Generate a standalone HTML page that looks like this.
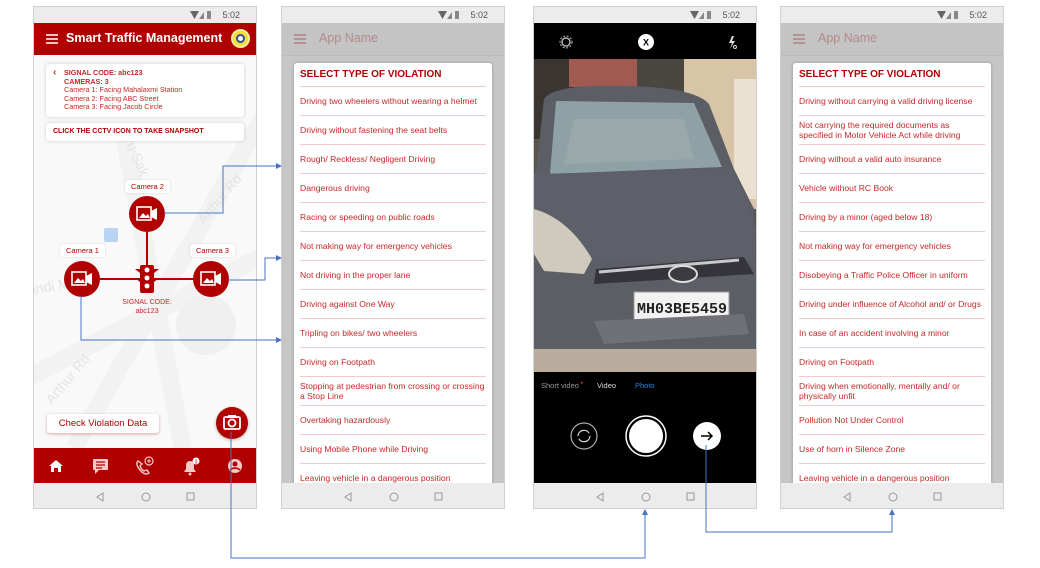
<!DOCTYPE html>
<html><head><meta charset="utf-8"><style>
*{margin:0;padding:0;box-sizing:border-box}
body{width:1040px;height:568px;background:#fff;position:relative;overflow:hidden;font-family:"Liberation Sans",Arial,sans-serif}
.a{position:absolute}
.scr{position:absolute;top:6px;width:224px;height:503px;border:1px solid #d0d0d0;overflow:hidden;background:#fff}
.sb{position:absolute;left:0;top:0;width:100%;height:16px;background:#ececec;font-size:9px;color:#555}
.sb span{position:absolute;right:16px;top:3px}
.sbi{position:absolute;right:44px;top:3px;width:22px;height:10px}
.nav{position:absolute;left:0;top:476px;width:100%;height:27px;background:#ececec}
.card{position:absolute;left:12px;top:56px;width:198px;height:430px;background:#fff;border-radius:3px;box-shadow:0 0 3px rgba(0,0,0,.25);padding:0 6px}
.card h3{font-size:10px;color:#b00000;height:24px;line-height:24px;border-bottom:1px solid #f2caca;font-weight:bold}
.card div{height:29px;border-bottom:1px solid #f2caca;font-size:8.6px;color:#c62828;display:flex;align-items:center;line-height:10px}
.lbl{position:absolute;background:#fff;border-radius:3px;font-size:7.5px;color:#b00000;padding:2px 6px;box-shadow:0 0 2px rgba(0,0,0,.15)}
</style></head><body>

<!-- SCREEN 1 -->
<div class="scr" style="left:33px">
 <div class="a" style="left:0;top:48px;width:224px;height:393px;background:#f9f9f9"></div>
 <svg class="a" style="left:0;top:48px" width="224" height="393"><g fill="none" stroke="#f2f2f2" stroke-width="18"><path d="M-20 330 L230 200"/><path d="M90 80 L150 400"/><path d="M230 60 L40 393"/></g><circle cx="172" cy="270" r="30" fill="#f0f0f0"/>
 <g fill="#e4e4e4" font-size="14" font-family="Liberation Sans"><text transform="translate(18 350) rotate(-50)">Arthur Rd</text><text transform="translate(170 170) rotate(-50)">Arthur Rd</text><text transform="translate(-5 240) rotate(-10)">andi Marg</text><text transform="translate(92 90) rotate(65)">u Sak</text></g>
 <rect x="70" y="173" width="14" height="14" rx="2" fill="#b9d3f2"/></svg>
 <div class="sb"><svg class="sbi" viewBox="0 0 22 10"><path d="M0 1 L9 1 L4.5 9Z" fill="#666"/><path d="M9 9 L14 2 L14 9Z" fill="#888"/><rect x="17" y="1" width="4" height="8" fill="#888"/></svg><span>5:02</span></div>
 <div class="a" style="left:0;top:16px;width:224px;height:32px;background:#b00000"></div>
 <svg class="a" style="left:12px;top:27px" width="12" height="10"><path d="M0 1H12M0 5H12M0 9H12" stroke="#fff" stroke-width="1.6"/></svg>
 <div class="a" style="left:32px;top:24px;color:#fff;font-size:12.5px;font-weight:bold">Smart Traffic Management</div>
 <div class="a" style="left:197px;top:22px;width:19px;height:19px;border-radius:50%;background:#f2dd3a;border:2px solid #f7ec9a"><div style="margin:3px;width:9px;height:9px;border-radius:50%;background:#fff;border:2px solid #3b4c96"></div></div>
 <div class="a" style="left:12px;top:57px;width:198px;height:53px;background:#fff;border-radius:3px;box-shadow:0 0 3px rgba(0,0,0,.2);font-size:7.2px;color:#c62828;line-height:8.5px;padding:5px 0 0 18px">
  <div class="a" style="left:7px;top:5px;font-size:10px;font-weight:bold">‹</div>
  <b>SIGNAL CODE: abc123<br>CAMERAS: 3</b><br>Camera 1: Facing Mahalaxmi Station<br>Camera 2: Facing ABC Street<br>Camera 3: Facing Jacob Circle</div>
 <div class="a" style="left:12px;top:116px;width:198px;height:18px;background:#fff;border-radius:3px;box-shadow:0 0 3px rgba(0,0,0,.2);font-size:7px;font-weight:bold;color:#b00000;line-height:18px;padding-left:7px">CLICK THE CCTV ICON TO TAKE SNAPSHOT</div>
 <svg class="a" style="left:0;top:150px" width="224" height="170">
  <g stroke="#b00000" stroke-width="2"><path d="M113 57V122M48 122H177"/></g>
  <g fill="#b00000"><circle cx="113" cy="57" r="18"/><circle cx="48" cy="122" r="18"/><circle cx="177" cy="122" r="18"/>
  <rect x="106" y="108" width="14" height="28" rx="2"/><path d="M101 112h5v4zM125 112h-5v4zM101 121h5v4zM125 121h-5v4z"/></g>
  <g fill="#fff"><circle cx="113" cy="113" r="2.5"/><circle cx="113" cy="121" r="2.5"/><circle cx="113" cy="129" r="2.5"/></g>
  <g fill="none" stroke="#fff" stroke-width="1.6"><rect x="103" y="50" width="14" height="13"/><rect x="38" y="115" width="14" height="13"/><rect x="167" y="115" width="14" height="13"/></g>
  <g fill="#fff"><path d="M117 54l6-3v12l-6-3zM52 119l6-3v12l-6-3zM181 119l6-3v12l-6-3zM105 61l4-5 3 3 2-2 2 4zM40 126l4-5 3 3 2-2 2 4zM169 126l4-5 3 3 2-2 2 4z"/></g>
  <text x="113" y="147" fill="#c62828" font-size="7" text-anchor="middle" font-family="Liberation Sans">SIGNAL CODE:</text>
  <text x="113" y="156" fill="#c62828" font-size="7" text-anchor="middle" font-family="Liberation Sans">abc123</text>
 </svg>
 <div class="lbl" style="left:91px;top:173px">Camera 2</div>
 <div class="lbl" style="left:26px;top:237px">Camera 1</div>
 <div class="lbl" style="left:156px;top:237px">Camera 3</div>
 <div class="a" style="left:13px;top:407px;width:112px;height:19px;background:#fff;border-radius:3px;box-shadow:0 1px 3px rgba(176,0,0,.35);font-size:9.5px;color:#b00000;text-align:center;line-height:19px">Check Violation Data</div>
 <div class="a" style="left:182px;top:400px;width:32px;height:32px;border-radius:50%;background:#b00000;box-shadow:0 1px 3px rgba(0,0,0,.3)"><svg width="32" height="32"><rect x="8" y="10" width="16" height="12" rx="1.5" fill="none" stroke="#fff" stroke-width="1.8"/><rect x="12" y="8" width="8" height="3" fill="#fff"/><circle cx="16" cy="16" r="3.5" fill="none" stroke="#fff" stroke-width="1.8"/></svg></div>
 <div class="a" style="left:0;top:441px;width:224px;height:35px;background:#b00000"></div>
 <svg class="a" style="left:0;top:441px" width="224" height="35">
  <path d="M15 18l7-6 7 6h-2v6h-3v-4h-4v4h-3v-6z" fill="#fff"/>
  <rect x="59" y="11" width="15" height="11" rx="1" fill="#f7caca"/><path d="M61 22v4l4-4z" fill="#f7caca"/><path d="M62 14h9M62 17h9M62 20h6" stroke="#b00000" stroke-width="1.2"/>
  <path d="M104 13q-3 3 2 9t9 3l-2-3-3 1q-3-2-4-5l2-2z" fill="none" stroke="#f7caca" stroke-width="1.4"/><circle cx="115" cy="13" r="4" fill="none" stroke="#f7caca" stroke-width="1.2"/><path d="M115 11v4M113 13h4" stroke="#f7caca"/>
  <path d="M150 24h12l-2-3v-4a4 4 0 0 0-8 0v4z" fill="#f7caca"/><circle cx="156" cy="26" r="1.5" fill="#f7caca"/><circle cx="162" cy="13" r="3.5" fill="#fff"/><text x="162" y="15.5" font-size="5" fill="#b00000" text-anchor="middle" font-family="Liberation Sans">3</text>
  <circle cx="201" cy="18" r="7" fill="#f7caca"/><circle cx="201" cy="16" r="2.5" fill="#b00000"/><path d="M196 22q5-4 10 0" stroke="#b00000" stroke-width="1.5" fill="none"/>
 </svg>
 <div class="nav"><svg width="224" height="27"><path d="M69 10l-6 4 6 4z" fill="none" stroke="#999"/><circle cx="112" cy="14" r="4" fill="none" stroke="#999"/><rect x="153" y="10" width="7" height="7" fill="none" stroke="#999"/></svg></div>
</div>

<!-- SCREEN 2 -->
<div class="scr" style="left:281px;background:#c6c6c6">
 <div class="sb"><svg class="sbi" viewBox="0 0 22 10"><path d="M0 1 L9 1 L4.5 9Z" fill="#666"/><path d="M9 9 L14 2 L14 9Z" fill="#888"/><rect x="17" y="1" width="4" height="8" fill="#888"/></svg><span>5:02</span></div>
 <div class="a" style="left:0;top:16px;width:224px;height:33px;background:#c4c4c4;border-bottom:1px solid #bbb"></div>
 <svg class="a" style="left:12px;top:27px" width="12" height="10"><path d="M0 1H12M0 5H12M0 9H12" stroke="#b48080" stroke-width="1.4"/></svg>
 <div class="a" style="left:37px;top:24px;color:#b48a8a;font-size:12.5px">App Name</div>
 <div class="card"><h3>SELECT TYPE OF VIOLATION</h3>
  <div>Driving two wheelers without wearing a helmet</div><div>Driving without fastening the seat belts</div><div>Rough/ Reckless/ Negligent Driving</div><div>Dangerous driving</div><div>Racing or speeding on public roads</div><div>Not making way for emergency vehicles</div><div>Not driving in the proper lane</div><div>Driving against One Way</div><div>Tripling on bikes/ two wheelers</div><div>Driving on Footpath</div><div>Stopping at pedestrian from crossing or crossing a Stop Line</div><div>Overtaking hazardously</div><div>Using Mobile Phone while Driving</div><div>Leaving vehicle in a dangerous position</div></div>
 <div class="nav"><svg width="224" height="27"><path d="M69 10l-6 4 6 4z" fill="none" stroke="#999"/><circle cx="112" cy="14" r="4" fill="none" stroke="#999"/><rect x="153" y="10" width="7" height="7" fill="none" stroke="#999"/></svg></div>
</div>

<!-- SCREEN 3 -->
<div class="scr" style="left:533px;background:#000">
 <div class="sb"><svg class="sbi" viewBox="0 0 22 10"><path d="M0 1 L9 1 L4.5 9Z" fill="#666"/><path d="M9 9 L14 2 L14 9Z" fill="#888"/><rect x="17" y="1" width="4" height="8" fill="#888"/></svg><span>5:02</span></div>
 <svg class="a" style="left:0;top:16px" width="224" height="36"><circle cx="32" cy="19" r="4" fill="none" stroke="#bbb" stroke-width="1.4"/><circle cx="32" cy="19" r="6" fill="none" stroke="#bbb" stroke-dasharray="2 1.6"/><circle cx="112" cy="19" r="8" fill="#fff"/><text x="112" y="22.5" font-size="9" font-weight="bold" text-anchor="middle" font-family="Liberation Sans">X</text><path d="M198 13l-3 7h3l-2 6 5-8h-3l2-5z" fill="#ddd"/><circle cx="201" cy="24" r="1.5" fill="none" stroke="#ddd"/></svg>
 <svg class="a" style="left:0;top:52px" width="224" height="313">
  <rect width="224" height="313" fill="#5a554e"/>
  <rect x="0" y="0" width="40" height="80" fill="#3a3530"/>
  <rect x="35" y="0" width="68" height="28" fill="#a05a52"/>
  <rect x="103" y="0" width="50" height="40" fill="#4a4640"/>
  <rect x="150" y="0" width="74" height="150" fill="#d8c4a6"/><rect x="200" y="20" width="24" height="120" fill="#ebe1d2"/>
  <rect x="0" y="280" width="224" height="33" fill="#b8ad9c"/>
  <path d="M10 40 Q20 25 90 27 Q160 28 175 45 L200 110 L220 150 L224 290 L0 290 L0 130 Z" fill="#5c5e66"/>
  <path d="M22 42 L160 44 L188 108 L16 115 Z" fill="#8ea2a6"/>
  <path d="M40 60 L150 60 L160 100 L30 105 Z" fill="#a4b0ae" opacity=".5"/>
  <path d="M0 115 L200 110 L222 170 L220 200 L0 205 Z" fill="#5e6069"/>
  <path d="M0 150 Q35 160 58 200 L50 215 L10 212 L0 195 Z" fill="#cfcabd"/>
  <path d="M62 210 L210 198 L220 215 L60 225 Z" fill="#34343a"/>
  <path d="M65 213 L205 201" stroke="#c8c8cc" stroke-width="3"/>
  <ellipse cx="149" cy="215" rx="14" ry="8" fill="#3a3a40" stroke="#ddd" stroke-width="2"/>
  <rect x="100" y="233" width="95" height="29" fill="#f2f2f2" stroke="#999"/>
  <text x="148" y="254" font-size="15" font-weight="bold" text-anchor="middle" fill="#222" font-family="Liberation Mono">MH03BE5459</text>
  <path d="M60 262 L210 255 L215 275 L70 285 Z" fill="#707078"/>
 </svg>
 <div class="a" style="left:7px;top:374px;font-size:7.5px;color:#999">Short video<span style="color:#f44;font-size:6px;vertical-align:top"> •</span></div>
 <div class="a" style="left:63px;top:374px;font-size:7.5px;color:#ddd">Video</div>
 <div class="a" style="left:101px;top:374px;font-size:7.5px;color:#1e88e5">Photo</div>
 <svg class="a" style="left:0;top:400px" width="224" height="60">
  <circle cx="50" cy="29" r="13" fill="none" stroke="#aaa" stroke-width="1.2"/><path d="M44 29a6 6 0 0 1 11-3M56 29a6 6 0 0 1-11 3" fill="none" stroke="#ddd" stroke-width="1.2"/>
  <circle cx="112" cy="29" r="20" fill="none" stroke="#fff" stroke-width="1.5"/><circle cx="112" cy="29" r="17" fill="#fff"/>
  <circle cx="173" cy="29" r="14" fill="#fff"/><path d="M167 29h11M174 25l4 4-4 4" fill="none" stroke="#000" stroke-width="1.5"/>
 </svg>
 <div class="nav"><svg width="224" height="27"><path d="M69 10l-6 4 6 4z" fill="none" stroke="#999"/><circle cx="112" cy="14" r="4" fill="none" stroke="#999"/><rect x="153" y="10" width="7" height="7" fill="none" stroke="#999"/></svg></div>
</div>

<!-- SCREEN 4 -->
<div class="scr" style="left:780px;background:#c6c6c6">
 <div class="sb"><svg class="sbi" viewBox="0 0 22 10"><path d="M0 1 L9 1 L4.5 9Z" fill="#666"/><path d="M9 9 L14 2 L14 9Z" fill="#888"/><rect x="17" y="1" width="4" height="8" fill="#888"/></svg><span>5:02</span></div>
 <div class="a" style="left:0;top:16px;width:224px;height:33px;background:#c4c4c4;border-bottom:1px solid #bbb"></div>
 <svg class="a" style="left:12px;top:27px" width="12" height="10"><path d="M0 1H12M0 5H12M0 9H12" stroke="#b48080" stroke-width="1.4"/></svg>
 <div class="a" style="left:37px;top:24px;color:#b48a8a;font-size:12.5px">App Name</div>
 <div class="card"><h3>SELECT TYPE OF VIOLATION</h3>
  <div>Driving without carrying a valid driving license</div><div>Not carrying the required documents as specified in Motor Vehicle Act while driving</div><div>Driving without a valid auto insurance</div><div>Vehicle without RC Book</div><div>Driving by a minor (aged below 18)</div><div>Not making way for emergency vehicles</div><div>Disobeying a Traffic Police Officer in uniform</div><div>Driving under influence of Alcohol and/ or Drugs</div><div>In case of an accident involving a minor</div><div>Driving on Footpath</div><div>Driving when emotionally, mentally and/ or physically unfit</div><div>Pollution Not Under Control</div><div>Use of horn in Silence Zone</div><div>Leaving vehicle in a dangerous position</div></div>
 <div class="nav"><svg width="224" height="27"><path d="M69 10l-6 4 6 4z" fill="none" stroke="#999"/><circle cx="112" cy="14" r="4" fill="none" stroke="#999"/><rect x="153" y="10" width="7" height="7" fill="none" stroke="#999"/></svg></div>
</div>

<!-- connector lines -->
<svg class="a" style="left:0;top:0" width="1040" height="568">
 <g fill="none" stroke="#4a72c4" stroke-width="1">
  <path d="M164 213H223V166H276"/><path d="M228 280H265V258H276"/><path d="M81 296V340H276"/>
  <path d="M231 432V558H645V514"/><path d="M706 445V532H892V514"/>
 </g>
 <g fill="#4a72c4"><path d="M282 166l-6-3v6z"/><path d="M282 258l-6-3v6z"/><path d="M282 340l-6-3v6z"/><path d="M645 509l-3 6h6z"/><path d="M892 509l-3 6h6z"/></g>
</svg>
</body></html>
